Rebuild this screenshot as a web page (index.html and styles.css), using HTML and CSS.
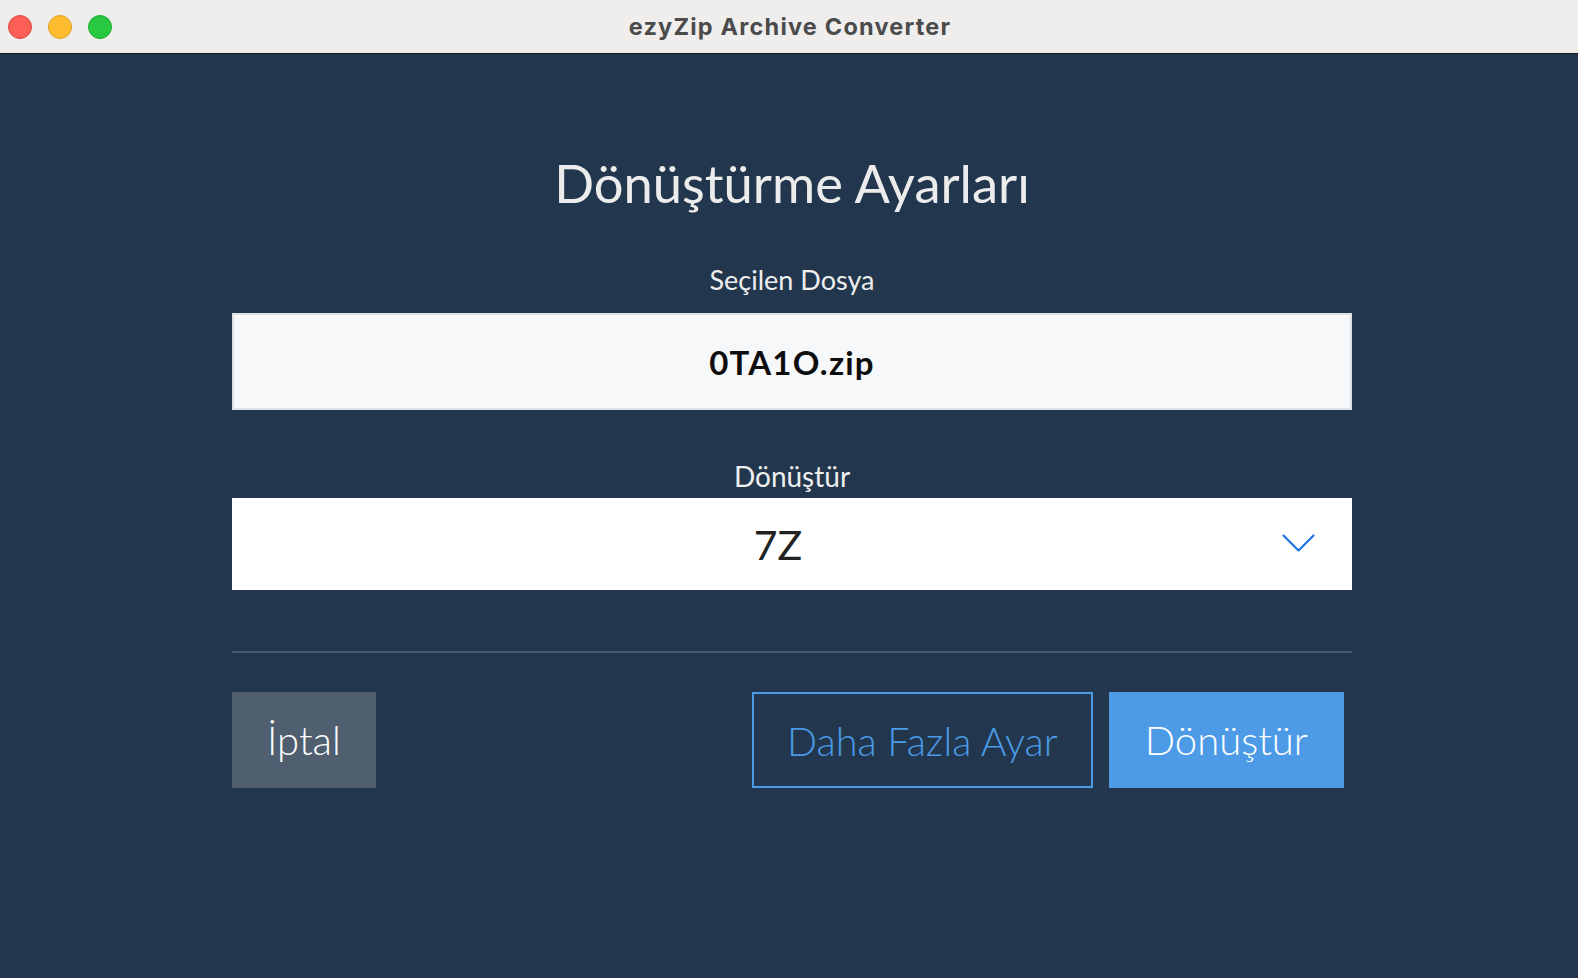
FILE: index.html
```html
<!DOCTYPE html>
<html lang="tr">
<head>
<meta charset="utf-8">
<title>ezyZip Archive Converter</title>
<link rel="stylesheet" href="styles.css">
</head>
<body>
<div class="window">
  <header class="titlebar">
    <div class="lights">
      <span class="light red"></span>
      <span class="light yellow"></span>
      <span class="light green"></span>
    </div>
    <div class="app-title">ezyZip Archive Converter</div>
  </header>
  <main class="content">
    <h1 class="heading">Dönüştürme Ayarları</h1>
    <div class="label label-file">Seçilen Dosya</div>
    <div class="file-box">0TA1O.zip</div>
    <div class="label label-format">Dönüştür</div>
    <div class="select">
      <span class="select-value">7Z</span>
      <svg class="chevron" width="33" height="19" viewBox="0 0 33 19" aria-hidden="true">
        <path d="M1.5 1.5 L16.5 16.5 L31.5 1.5" fill="none" stroke="#1f74e6" stroke-width="2.2" stroke-linecap="round" stroke-linejoin="round"/>
      </svg>
    </div>
    <div class="divider"></div>
    <div class="actions">
      <button class="btn btn-cancel">İptal</button>
      <div class="actions-right">
        <button class="btn btn-outline">Daha Fazla Ayar</button>
        <button class="btn btn-primary">Dönüştür</button>
      </div>
    </div>
  </main>
</div>
</body>
</html>
```
FILE: styles.css
```css
html, body {
  margin: 0;
  padding: 0;
  height: 100%;
}

body {
  background: #22374d;
  font-family: "Lato", "Open Sans", sans-serif;
}

.window {
  display: flex;
  flex-direction: column;
  min-height: 100vh;
}

.titlebar {
  height: 53px;
  background: #efeeed;
  border-bottom: 1px solid #15191e;
  display: flex;
  align-items: center;
  position: relative;
  flex-shrink: 0;
}

.lights {
  display: flex;
  gap: 16px;
  padding-left: 8px;
}

.light {
  width: 24px;
  height: 24px;
  border-radius: 50%;
  box-sizing: border-box;
}

.red { background: #fe5f57; border: 1px solid #e14942; }
.yellow { background: #febc2e; border: 1px solid #dfa123; }
.green { background: #28c840; border: 1px solid #1eac2e; }

.app-title {
  position: absolute;
  left: 0;
  right: 0;
  padding-left: 2px;
  text-align: center;
  font-family: "Inter", "Liberation Sans", sans-serif;
  font-weight: 700;
  font-size: 23.5px;
  color: #4b4b4b;
  letter-spacing: 1.2px;
  pointer-events: none;
}

.content {
  width: 1120px;
  margin-left: 232px;
  padding-top: 98px;
  display: flex;
  flex-direction: column;
}

.heading {
  margin: 0;
  font-weight: 400;
  font-size: 52.5px;
  line-height: 62px;
  color: #ececec;
  text-align: center;
}

.label {
  font-size: 27px;
  line-height: 32px;
  color: #efefef;
  text-align: center;
}

.label-file {
  margin-top: 50px;
}

.file-box {
  margin-top: 17px;
  height: 97px;
  box-sizing: border-box;
  background: #f7f8fa;
  border: 2px solid #dde1e6;
  display: flex;
  align-items: center;
  justify-content: center;
  font-weight: 700;
  font-size: 33px;
  letter-spacing: 1.2px;
  color: #0d0d0d;
  padding-top: 1px;
}

.label-format {
  margin-top: 50px;
  font-size: 28px;
}

.select {
  margin-top: 6px;
  height: 92px;
  background: #ffffff;
  display: flex;
  align-items: center;
  position: relative;
}

.select-value {
  flex: 1;
  text-align: center;
  padding-right: 28px;
  font-size: 41px;
  color: #222;
}

.chevron {
  position: absolute;
  right: 37px;
  top: 36px;
}

.divider {
  margin-top: 61px;
  height: 2px;
  background: #4b5a6b;
}

.actions {
  margin-top: 39px;
  display: flex;
  justify-content: space-between;
  align-items: center;
}

.actions-right {
  display: flex;
  gap: 16px;
  margin-right: 8px;
}

.btn {
  height: 96px;
  box-sizing: border-box;
  border: none;
  margin: 0;
  font-family: "Lato", "Open Sans", sans-serif;
  font-weight: 300;
  font-size: 40px;
  padding: 0 36px;
  cursor: pointer;
}

.btn-cancel {
  background: #4f5f6f;
  color: #ffffff;
  padding: 0 35px;
}

.btn-outline {
  background: transparent;
  border: 2px solid #4a9ae6;
  color: #4a9ae6;
  padding: 0 33px;
  font-size: 39.6px;
}

.btn-primary {
  background: #4d9be6;
  color: #ffffff;
  padding: 0 36px;
}
```
